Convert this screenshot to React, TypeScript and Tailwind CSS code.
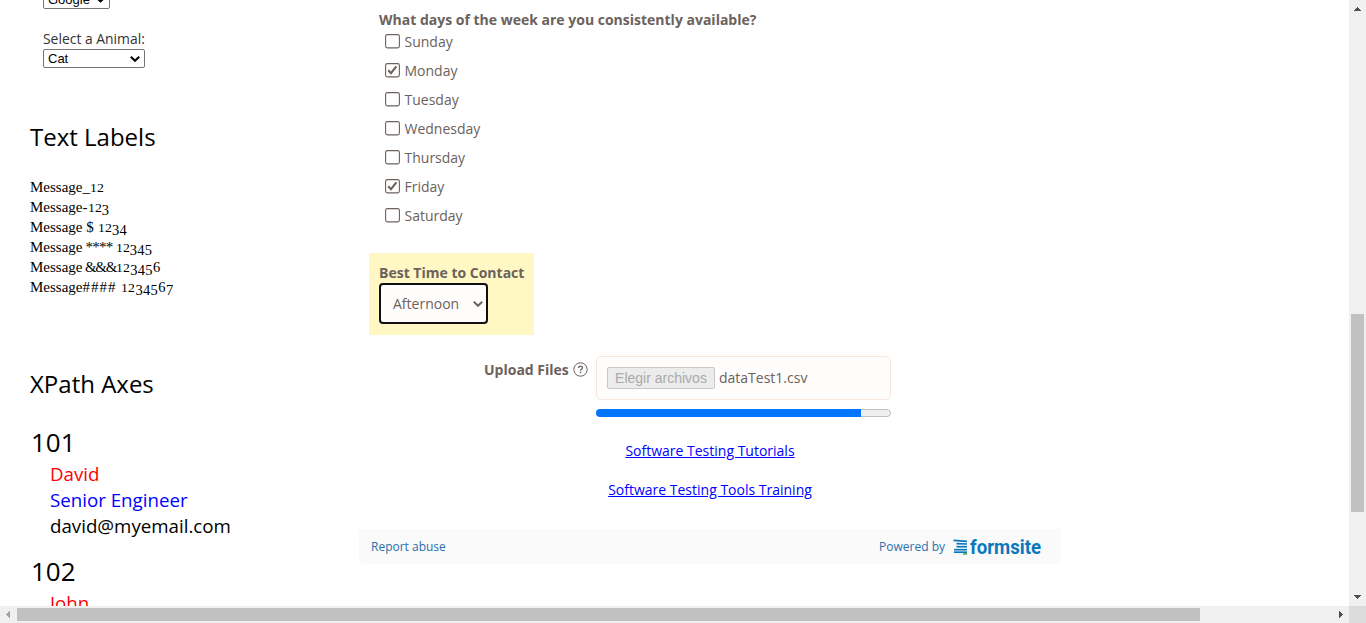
import React from "react";

const days: [string, boolean][] = [
  ["Sunday", false],
  ["Monday", true],
  ["Tuesday", false],
  ["Wednesday", false],
  ["Thursday", false],
  ["Friday", true],
  ["Saturday", false],
];

const messages: { text: string; symbols: string; tracking: string; digits: string }[] = [
  { text: "Message", symbols: "_", tracking: "tracking-[0.4px]", digits: "12" },
  { text: "Message", symbols: "-", tracking: "tracking-[0px]", digits: "123" },
  { text: "Message", symbols: " $ ", tracking: "tracking-[0.1px]", digits: "1234" },
  { text: "Message", symbols: " **** ", tracking: "tracking-[-0.75px]", digits: "12345" },
  { text: "Message", symbols: " &&&", tracking: "tracking-[-1.3px]", digits: "123456" },
  { text: "Message", symbols: "#### ", tracking: "tracking-[1px]", digits: "1234567" },
];

function Chevron({ className }: { className: string }) {
  return (
    <svg className={className} viewBox="0 0 10 6" fill="none" stroke="currentColor" strokeWidth="2">
      <path d="M0.8 0.8 L5 4.8 L9.2 0.8" />
    </svg>
  );
}

/* Old-style numerals: 1 and 2 sit at x-height, 3-5 and 7 descend, 6 ascends. */
function Digits({ value }: { value: string }) {
  return (
    <>
      {value.split("").map((d, i) => {
        if (d === "1" || d === "2")
          return <span key={i} className="inline-block w-[7px] [transform:scaleX(1.2)] text-center text-[11.5px] leading-none">{d}</span>;
        if (d === "6") return <span key={i} className="inline-block w-[8px] text-center text-[14.5px] leading-none">{d}</span>;
        return <span key={i} className="relative top-[2.5px] inline-block w-[7.5px] text-center text-[14.5px] leading-none">{d}</span>;
      })}
    </>
  );
}

function Checkbox({ checked }: { checked: boolean }) {
  return (
    <svg className="mr-[4.5px] h-[15px] w-[15px]" viewBox="0 0 15 15" fill="none" stroke="#6b625c">
      <rect x="0.6" y="0.6" width="13.8" height="13.3" rx="1.8" strokeWidth="1.1" />
      {checked && <path d="M3.2 7.3 L6 10.2 L11.4 3.4" strokeWidth="2.1" />}
    </svg>
  );
}

function Person({ id, name, role, email }: { id: string; name: string; role?: string; email?: string }) {
  return (
    <div className="h-[129px] shrink-0">
      <div className="h-[36px] pl-px text-[26px] leading-[34px]">{id}</div>
      <div className="pl-5 text-[18.72px] leading-[26px]">
        <div className="text-[#ff0000]">{name}</div>
        {role && <div className="text-[#0000ff]">{role}</div>}
        {email && <div>{email}</div>}
      </div>
    </div>
  );
}

export default function App() {
  return (
    <div className="flex h-[623px] w-[1366px] flex-col overflow-hidden bg-white font-['Open_Sans',sans-serif] text-black">
      <div className="flex h-[606px]">
        <main className="flex flex-1 overflow-hidden">
          <aside className="flex h-[606px] w-[359px] flex-col overflow-hidden pl-[30px]">
            <div className="flex h-[9px] shrink-0 flex-col justify-end overflow-hidden pl-[13px]">
              <div className="flex h-[19px] w-[67px] shrink-0 items-center justify-between rounded-[2px] border border-[#767676] pr-1 pl-1 font-['Liberation_Sans',sans-serif] text-[13px]">
                Google
                <Chevron className="h-[6px] w-[9px]" />
              </div>
            </div>
            <div className="mt-[20px] h-[20px] shrink-0 pl-[13px] text-[13.9px] leading-[20px] text-[#333]">Select a Animal:</div>
            <div className="ml-[13px] flex h-[19px] w-[102px] shrink-0 items-center justify-between rounded-[2px] border border-[#767676] pr-1 pl-1 font-['Liberation_Sans',sans-serif] text-[13px]">
              Cat
              <Chevron className="h-[6px] w-[10px]" />
            </div>
            <h2 className="mt-[52px] h-[34px] shrink-0 text-[24px] leading-[34px]">Text Labels</h2>
            <div className="mt-[23px] shrink-0 font-['Liberation_Serif',serif] text-[15px] whitespace-pre">
              {messages.map(({ text, symbols, tracking, digits }) => (
                <div key={digits} className="h-5 leading-5">
                  {text}
                  <span className={tracking}>{symbols}</span>
                  <Digits value={digits} />
                </div>
              ))}
            </div>
            <h2 className="mt-[70px] h-[34px] shrink-0 text-[24px] leading-[34px]">XPath Axes</h2>
            <div className="mt-[24px]">
              <Person id="101" name="David" role="Senior Engineer" email="david@myemail.com" />
              <Person id="102" name="John" />
            </div>
          </aside>
          <section className="flex w-[702px] flex-col text-[14px] text-[#6b625c]">
            <div className="mt-[10px] h-[20px] pl-5 leading-[20px] font-bold">What days of the week are you consistently available?</div>
            <div className="mt-[-3px] pl-[26px]">
              {days.map(([day, checked]) => (
                <div key={day} className="flex h-[29px] items-center">
                  <Checkbox checked={checked} />
                  <span className="leading-[20px]">{day}</span>
                </div>
              ))}
            </div>
            <div className="mt-[23px] ml-[10px] flex h-[82px] w-[165px] flex-col bg-[#fff8c4] pt-[10px] pl-[10px]">
              <div className="h-[20px] leading-[20px] font-bold">Best Time to Contact</div>
              <div className="flex h-[41px] w-[109px] items-center justify-between rounded-[4px] border-2 border-[#101010] bg-[#fffdfc] pr-[3px] pl-[12px]">
                Afternoon
                <Chevron className="h-[6px] w-[10px]" />
              </div>
            </div>
            <div className="mt-[21px] flex h-[61px] pl-[125px]">
              <div className="mt-[4px] h-5 w-[89px] leading-5 font-bold whitespace-nowrap">Upload Files</div>
              <svg className="mt-[5.5px] h-[15px] w-[15px]" viewBox="0 0 15 15" fill="none" stroke="#6b625c">
                <circle cx="7.5" cy="7.5" r="6.7" strokeWidth="1" />
                <path d="M5.6 5.9 C5.6 3.6 9.4 3.6 9.4 5.8 C9.4 7.2 7.5 7.2 7.5 8.8" strokeWidth="1.4" />
                <path d="M7.5 9.8 V11.2" strokeWidth="1.5" />
              </svg>
              <div className="ml-[8px] w-[295px]">
                <div className="flex h-[44px] items-center rounded-[5px] border border-[#f9e5d9] bg-[#fffdfc] pl-[10px]">
                  <span className="flex h-[22px] w-[108px] items-center justify-center rounded-[2px] border border-[#c9c9c9] bg-[#ececec] font-['Liberation_Sans',sans-serif] text-[14px] text-[#aaa]">
                    Elegir archivos
                  </span>
                  <span className="mb-[2px] ml-1">dataTest1.csv</span>
                </div>
                <div className="mt-[9px] flex h-[8px] overflow-hidden rounded-[4px]">
                  <div className="h-[8px] w-[265px] bg-[#0075ff]" />
                  <div className="h-[8px] flex-1 rounded-r-[4px] border border-l-0 border-[#c0c0c0] bg-[#efefef]" />
                </div>
              </div>
            </div>
            <div className="mt-[24px] h-5 text-center leading-5 text-[#0000ff]">
              <a className="underline">Software Testing Tutorials</a>
            </div>
            <div className="mt-[19px] h-5 text-center leading-5 text-[#0000ff]">
              <a className="underline">Software Testing Tools Training</a>
            </div>
            <footer className="mt-[29px] flex h-[35px] items-center rounded-b-[5px] bg-[#fafafa] pr-[20px] pl-3 text-[12px] text-[#2a6ead]">
              <span className="flex-1">Report abuse</span>
              <span>Powered by</span>
              <svg className="ml-[8px] h-[20px] w-[88px]" viewBox="0 0 88 20">
                <g stroke="#0a78bd" strokeWidth="1.7" fill="none">
                  <path d="M0.5 3.4 L14 4.4" />
                  <path d="M3.5 6.6 L14 7" />
                  <path d="M3.5 9.7 H14" />
                  <path d="M1 12.7 H14" />
                  <path d="M1 15.2 H14" />
                </g>
                <path d="M10 17.2 L14 16.6" stroke="#4cae4c" strokeWidth="1.6" />
                <text x="17" y="16.5" textLength="71" lengthAdjust="spacingAndGlyphs" fill="#0a78bd" fontSize="19.5" fontWeight="700" fontFamily="Roboto, sans-serif">formsite</text>
              </svg>
            </footer>
          </section>
        </main>
        <div className="flex w-[17px] flex-col items-center bg-[#f0f0f0]">
          <svg className="mt-[7px] h-[4px] w-[7px]" viewBox="0 0 7 4" shapeRendering="crispEdges"><path d="M3 0h1v1h1v1h1v1h1v1h-7v-1h1v-1h1v-1h1z" fill="#505050" /></svg>
          <div className="mt-[303px] h-[198px] w-[13px] bg-[#c1c1c1]" />
          <svg className="mt-[83px] h-[4px] w-[7px]" viewBox="0 0 7 4" shapeRendering="crispEdges"><path d="M0 0h7v1h-1v1h-1v1h-1v1h-1v-1h-1v-1h-1v-1h-1z" fill="#505050" /></svg>
        </div>
      </div>
      <div className="flex h-[17px] items-center bg-[#f0f0f0]">
        <svg className="ml-[6px] h-[7px] w-[4px]" viewBox="0 0 4 7" shapeRendering="crispEdges"><path d="M3 0h1v7h-1v-1h-1v-1h-1v-1h-1v-1h1v-1h1v-1h1z" fill="#a3a3a3" /></svg>
        <div className="ml-[7px] h-[13px] w-[1183px] bg-[#c1c1c1]" />
        <svg className="ml-[139px] h-[7px] w-[4px]" viewBox="0 0 4 7" shapeRendering="crispEdges"><path d="M0 0h1v1h1v1h1v1h1v1h-1v1h-1v1h-1v1h-1z" fill="#505050" /></svg>
        <div className="ml-auto h-[17px] w-[17px] bg-[#dcdcdc]" />
      </div>
    </div>
  );
}
